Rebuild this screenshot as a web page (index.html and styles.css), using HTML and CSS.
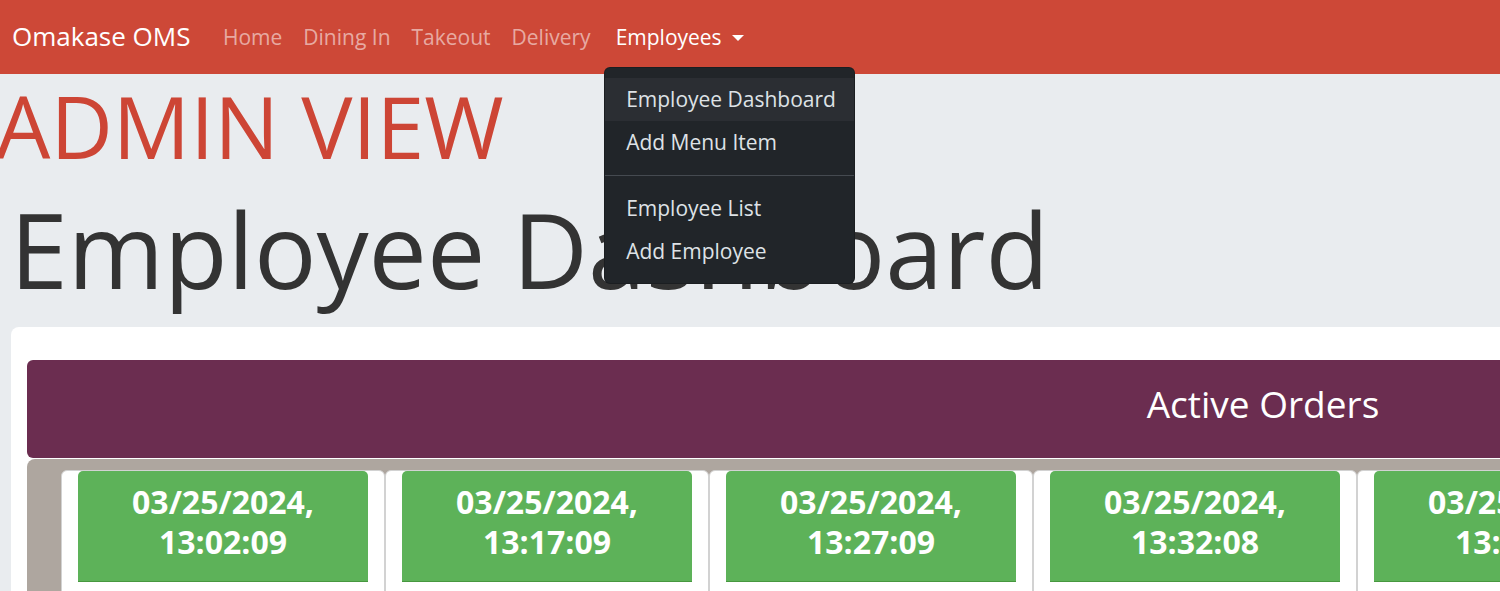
FILE: index.html
```html
<!DOCTYPE html>
<html lang="en">
<head>
<meta charset="utf-8">
<title>Omakase OMS - Employee Dashboard</title>
<link rel="stylesheet" href="styles.css">
</head>
<body>
<nav class="navbar">
  <a class="brand" href="#">Omakase OMS</a>
  <ul class="nav">
    <li><a class="nav-link" href="#">Home</a></li>
    <li><a class="nav-link" href="#">Dining In</a></li>
    <li><a class="nav-link" href="#">Takeout</a></li>
    <li><a class="nav-link" href="#">Delivery</a></li>
    <li class="dropdown">
      <a class="nav-link active" href="#">Employees <span class="caret"></span></a>
      <div class="dropdown-menu">
        <a class="dropdown-item hover" href="#">Employee Dashboard</a>
        <a class="dropdown-item" href="#">Add Menu Item</a>
        <hr class="dropdown-divider">
        <a class="dropdown-item" href="#">Employee List</a>
        <a class="dropdown-item" href="#">Add Employee</a>
      </div>
    </li>
  </ul>
</nav>
<main class="page">
  <div class="admin">ADMIN VIEW</div>
  <h1 class="title">Employee Dashboard</h1>
  <section class="panel">
    <div class="orders-head">Active Orders</div>
    <div class="orders-row">
      <div class="order-card"><div class="order-time">03/25/2024,<br>13:02:09</div></div>
      <div class="order-card"><div class="order-time">03/25/2024,<br>13:17:09</div></div>
      <div class="order-card"><div class="order-time">03/25/2024,<br>13:27:09</div></div>
      <div class="order-card"><div class="order-time">03/25/2024,<br>13:32:08</div></div>
      <div class="order-card"><div class="order-time">03/25/2024,<br>13:37:09</div></div>
      <div class="order-card"><div class="order-time">03/25/2024,<br>13:42:09</div></div>
      <div class="order-card"><div class="order-time">03/25/2024,<br>13:47:09</div></div>
    </div>
  </section>
</main>
</body>
</html>
```

FILE: styles.css
```css
html, body {
  overflow: hidden;
}
body {
  margin: 0;
  background: #e9ecef;
  font-family: "Open Sans", "Noto Sans", sans-serif;
  color: #333;
}
a { text-decoration: none; }

.navbar {
  height: 74px;
  background: #cd4837;
  display: flex;
  align-items: center;
  padding: 0 12px;
  box-sizing: border-box;
}
.brand {
  color: #fff;
  font-size: 26px;
  margin-right: 22px;
  margin-top: -2px;
}
.nav {
  list-style: none;
  margin: 0;
  padding: 0;
  display: flex;
  align-items: center;
}
.nav-link {
  display: block;
  padding: 10px 10.5px;
  font-size: 21px;
  color: rgba(255, 255, 255, 0.55);
}
.nav-link.active { color: #fff; }
.dropdown { position: relative; margin-left: 4px; }
.caret {
  display: inline-block;
  margin-left: 5px;
  vertical-align: 4px;
  border-top: 6px solid #fff;
  border-left: 6px solid transparent;
  border-right: 6px solid transparent;
}
.dropdown-menu {
  position: absolute;
  left: -1px;
  top: 54px;
  width: 251px;
  box-sizing: border-box;
  background: #212529;
  border: 1px solid rgba(0, 0, 0, 0.18);
  border-radius: 6px;
  padding: 10px 0;
  z-index: 10;
}
.dropdown-item {
  display: block;
  height: 43px;
  line-height: 43px;
  padding: 0 21px;
  font-size: 21px;
  color: #dee2e6;
  white-space: nowrap;
}
.dropdown-item.hover { background: #2b2e33; }
.dropdown-divider {
  margin: 11px 0;
  border: 0;
  border-top: 1px solid #454a50;
}

.admin {
  color: #cd4535;
  font-size: 86px;
  line-height: 1;
  margin: 9px 0 0 -4px;
  font-weight: 400;
}
.title {
  font-size: 104px;
  font-weight: 400;
  line-height: 1.2;
  margin: 18px 0 0 10px;
  color: #333;
}
.panel {
  margin: 15px 0 0 11px;
  width: 2472px;
  background: #fff;
  border-radius: 8px;
  padding: 33px 16px 0;
}
.orders-head {
  background: #6b2d50;
  color: #fff;
  height: 98px;
  box-sizing: border-box;
  padding-bottom: 10px;
  display: flex;
  align-items: center;
  justify-content: center;
  font-size: 37px;
  border-radius: 6px;
}
.orders-row {
  margin-top: 1px;
  background: #aea69f;
  border-radius: 8px 8px 0 0;
  display: flex;
  padding: 11px 0 0 34px;
  height: 200px;
}
.order-card {
  flex: 0 0 324px;
  box-sizing: border-box;
  background: #fff;
  border: 1px solid #d2d2d2;
  border-radius: 6px;
  padding: 0 16px;
}
.order-time {
  background: #5db259;
  border-bottom: 1px solid #47983f;
  border-radius: 5px 5px 0 0;
  color: #fff;
  font-weight: 700;
  font-size: 32px;
  line-height: 40px;
  text-align: center;
  padding: 11px 0 19px;
}
```
